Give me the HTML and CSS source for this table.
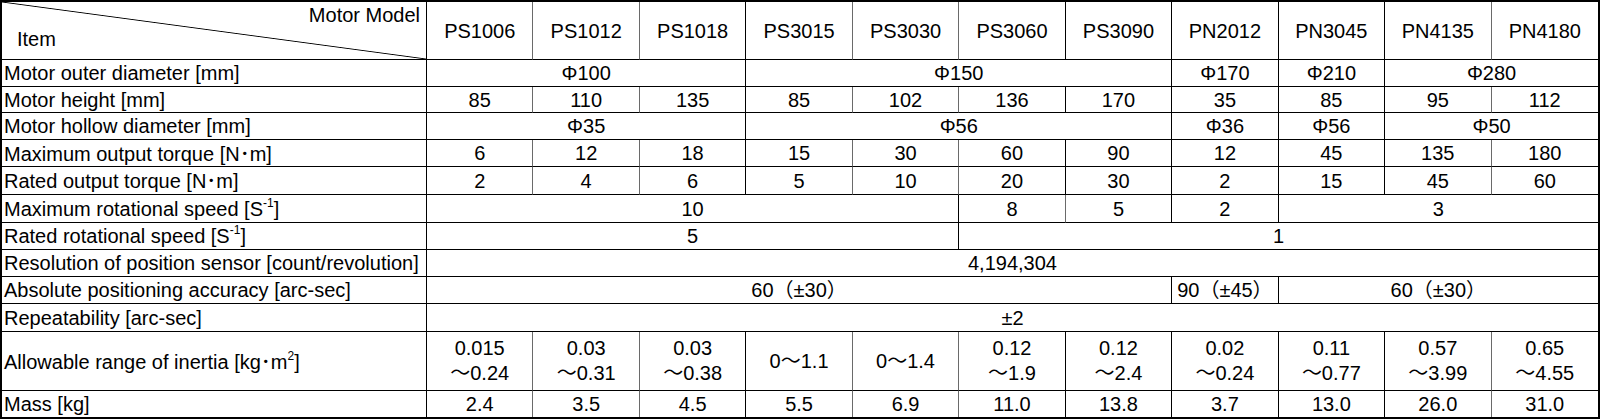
FILE: index.html
```html
<!DOCTYPE html>
<html lang="en">
<head>
<meta charset="utf-8">
<title>Motor specifications</title>
<link rel="stylesheet" href="styles.css">
</head>
<body>
<table class="spec">
  <colgroup>
    <col class="c-label">
    <col><col><col><col><col><col><col><col><col><col><col>
  </colgroup>
  <thead>
    <tr class="r-head">
      <th class="corner">
        <div class="corner-model">Motor Model</div>
        <div class="corner-item">Item</div>
      </th>
      <th>PS1006</th><th>PS1012</th><th class="k">PS1018</th><th>PS3015</th><th>PS3030</th><th class="k">PS3060</th><th class="k">PS3090</th><th class="k">PN2012</th><th class="k">PN3045</th><th>PN4135</th><th class="e">PN4180</th>
    </tr>
  </thead>
  <tbody>
    <tr class="r27">
      <td class="lbl">Motor outer diameter [mm]</td>
      <td colspan="3" class="k">Φ100</td><td colspan="4" class="k">Φ150</td><td class="k">Φ170</td><td class="k">Φ210</td><td colspan="2" class="e">Φ280</td>
    </tr>
    <tr class="r26">
      <td class="lbl">Motor height [mm]</td>
      <td>85</td><td>110</td><td class="k">135</td><td>85</td><td>102</td><td class="k">136</td><td class="k">170</td><td class="k">35</td><td class="k">85</td><td>95</td><td class="e">112</td>
    </tr>
    <tr class="r27">
      <td class="lbl">Motor hollow diameter [mm]</td>
      <td colspan="3" class="k">Φ35</td><td colspan="4" class="k">Φ56</td><td class="k">Φ36</td><td class="k">Φ56</td><td colspan="2" class="e">Φ50</td>
    </tr>
    <tr class="r27">
      <td class="lbl">Maximum output torque [N<span class="dot">･</span>m]</td>
      <td>6</td><td>12</td><td class="k">18</td><td>15</td><td>30</td><td class="k">60</td><td class="k">90</td><td class="k">12</td><td class="k">45</td><td>135</td><td class="e">180</td>
    </tr>
    <tr class="r28">
      <td class="lbl">Rated output torque [N<span class="dot">･</span>m]</td>
      <td>2</td><td>4</td><td class="k">6</td><td>5</td><td>10</td><td class="k">20</td><td class="k">30</td><td class="k">2</td><td class="k">15</td><td>45</td><td class="e">60</td>
    </tr>
    <tr class="r28">
      <td class="lbl">Maximum rotational speed [S<span class="sup">-1</span>]</td>
      <td colspan="5" class="k">10</td><td>8</td><td class="k">5</td><td class="k">2</td><td colspan="3" class="e">3</td>
    </tr>
    <tr class="r27">
      <td class="lbl">Rated rotational speed [S<span class="sup">-1</span>]</td>
      <td colspan="5" class="k">5</td><td colspan="6" class="e">1</td>
    </tr>
    <tr class="r27">
      <td class="lbl">Resolution of position sensor [count/revolution]</td>
      <td colspan="11" class="e">4,194,304</td>
    </tr>
    <tr class="r27">
      <td class="lbl">Absolute positioning accuracy [arc-sec]</td>
      <td colspan="7" class="k">60（±30）</td><td class="k">90（±45）</td><td colspan="3" class="e">60（±30）</td>
    </tr>
    <tr class="r28">
      <td class="lbl">Repeatability [arc-sec]</td>
      <td colspan="11" class="e">±2</td>
    </tr>
    <tr class="r59">
      <td class="lbl">Allowable range of inertia [kg<span class="dot">･</span>m<span class="sup">2</span>]</td>
      <td>0.015<br>～0.24</td><td>0.03<br>～0.31</td><td class="k">0.03<br>～0.38</td><td>0～1.1</td><td>0～1.4</td><td class="k">0.12<br>～1.9</td><td class="k">0.12<br>～2.4</td><td class="k">0.02<br>～0.24</td><td class="k">0.11<br>～0.77</td><td>0.57<br>～3.99</td><td class="e">0.65<br>～4.55</td>
    </tr>
    <tr class="r26 last">
      <td class="lbl">Mass [kg]</td>
      <td>2.4</td><td>3.5</td><td class="k">4.5</td><td>5.5</td><td>6.9</td><td class="k">11.0</td><td class="k">13.8</td><td class="k">3.7</td><td class="k">13.0</td><td>26.0</td><td class="e">31.0</td>
    </tr>
  </tbody>
</table>
</body>
</html>
```
FILE: styles.css
```css
html, body {
  margin: 0;
  padding: 0;
  background: #ffffff;
}

.spec {
  width: 1600px;
  table-layout: fixed;
  border-collapse: separate;
  border-spacing: 0;
  border: 2px solid #000;
  font-family: "Liberation Sans", "Noto Sans CJK JP", sans-serif;
  font-size: 20px;
  color: #000;
}

.c-label {
  width: 425px;
}

.spec th,
.spec td {
  padding: 0;
  font-weight: normal;
  text-align: center;
  vertical-align: middle;
  line-height: 22px;
  white-space: nowrap;
  border-right: 1px solid #6a6a6a;
  border-bottom: 1px solid #000;
}

.spec .k {
  border-right-color: #000;
}

.spec .e {
  border-right: 0;
}

.spec .last td {
  border-bottom: 0;
}

.spec td.lbl {
  text-align: left;
  padding-left: 2px;
  border-right-color: #000;
  overflow: visible;
}

.r-head { height: 58px; }
.r26 { height: 26px; }
.r27 { height: 27px; }
.r28 { height: 28px; }
.r59 { height: 59px; }

.r59 td {
  line-height: 25px;
}

.spec th.corner {
  text-align: left;
  vertical-align: top;
  border-right-color: #000;
  background-image: linear-gradient(to top right, #fff calc(50% - 0.9px), #000 50%, #fff calc(50% + 0.9px));
  background-repeat: no-repeat;
}

.corner-model {
  text-align: right;
  padding-right: 6px;
  line-height: 24px;
  margin-top: 1px;
}

.corner-item {
  padding-left: 15px;
  line-height: 24px;
  margin-top: 0;
}

.dot {
  font-family: "Noto Sans CJK JP", sans-serif;
}

.sup {
  font-size: 12px;
  line-height: 0;
  vertical-align: 9px;
}
```
